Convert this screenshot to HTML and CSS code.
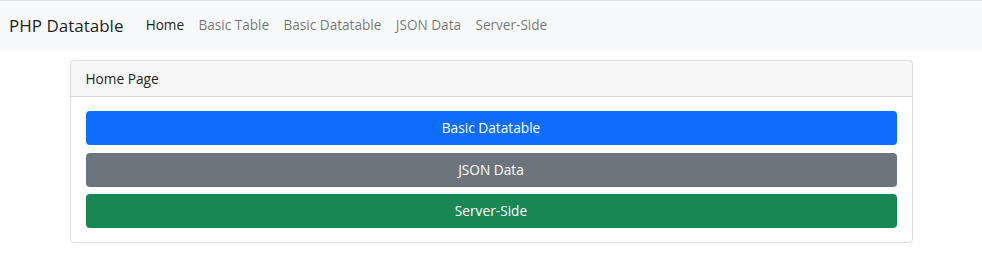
FILE: index.html
```html
<!DOCTYPE html>
<html lang="en">
<head>
    <meta charset="UTF-8">
    <meta name="viewport" content="width=device-width, initial-scale=1.0">
    <title>PHP Datatable</title>
    <link rel="stylesheet" href="styles.css">
</head>
<body>

    <nav class="navbar">
        <a href="#" class="brand">PHP Datatable</a>
        <ul class="nav">
            <li><a href="#" class="nav-link active">Home</a></li>
            <li><a href="#" class="nav-link">Basic Table</a></li>
            <li><a href="#" class="nav-link">Basic Datatable</a></li>
            <li><a href="#" class="nav-link">JSON Data</a></li>
            <li><a href="#" class="nav-link">Server-Side</a></li>
        </ul>
    </nav>

    <div class="container">
        <div class="card">
            <div class="card-header">Home Page</div>
            <div class="card-body">
                <a href="#" class="btn btn-primary">Basic Datatable</a>
                <a href="#" class="btn btn-secondary">JSON Data</a>
                <a href="#" class="btn btn-success">Server-Side</a>
            </div>
        </div>
    </div>

</body>
</html>
```
FILE: styles.css
```css
body {
    font-family: "Segoe UI", "Open Sans", Arial, sans-serif;
    font-size: 13.7px;
    line-height: 1.5;
    color: #212529;
    background-color: #fff;
    margin: 0;
    padding: 0;
}

.navbar {
    display: flex;
    align-items: center;
    height: 49px;
    padding: 0 9px;
    background-color: #f8f9fa;
    border-top: 1px solid #dee2e6;
}

.brand {
    font-size: 17px;
    color: rgba(0, 0, 0, 0.9);
    text-decoration: none;
    margin-right: 15px;
}

.nav {
    display: flex;
    list-style: none;
    margin: 0;
    padding: 0;
}

.nav-link {
    display: block;
    padding: 7px 7.2px;
    font-size: 13.6px;
    color: rgba(0, 0, 0, 0.55);
    text-decoration: none;
}

.nav-link.active {
    color: rgba(0, 0, 0, 0.9);
}

.container {
    width: 843px;
    margin: 10px auto 0;
}

.card {
    border: 1px solid rgba(0, 0, 0, 0.125);
    border-radius: 4px;
}

.card-header {
    padding: 7px 15px;
    line-height: 21px;
    background-color: rgba(0, 0, 0, 0.03);
    border-bottom: 1px solid rgba(0, 0, 0, 0.125);
}

.card-body {
    display: flex;
    flex-direction: column;
    gap: 7.5px;
    padding: 14px 15px;
}

.btn {
    display: block;
    height: 34px;
    line-height: 34px;
    text-align: center;
    color: white;
    text-decoration: none;
    border-radius: 4px;
}

.btn-primary {
    background-color: #0d6efd;
}

.btn-secondary {
    background-color: #6c757d;
}

.btn-success {
    background-color: #198754;
}
```
